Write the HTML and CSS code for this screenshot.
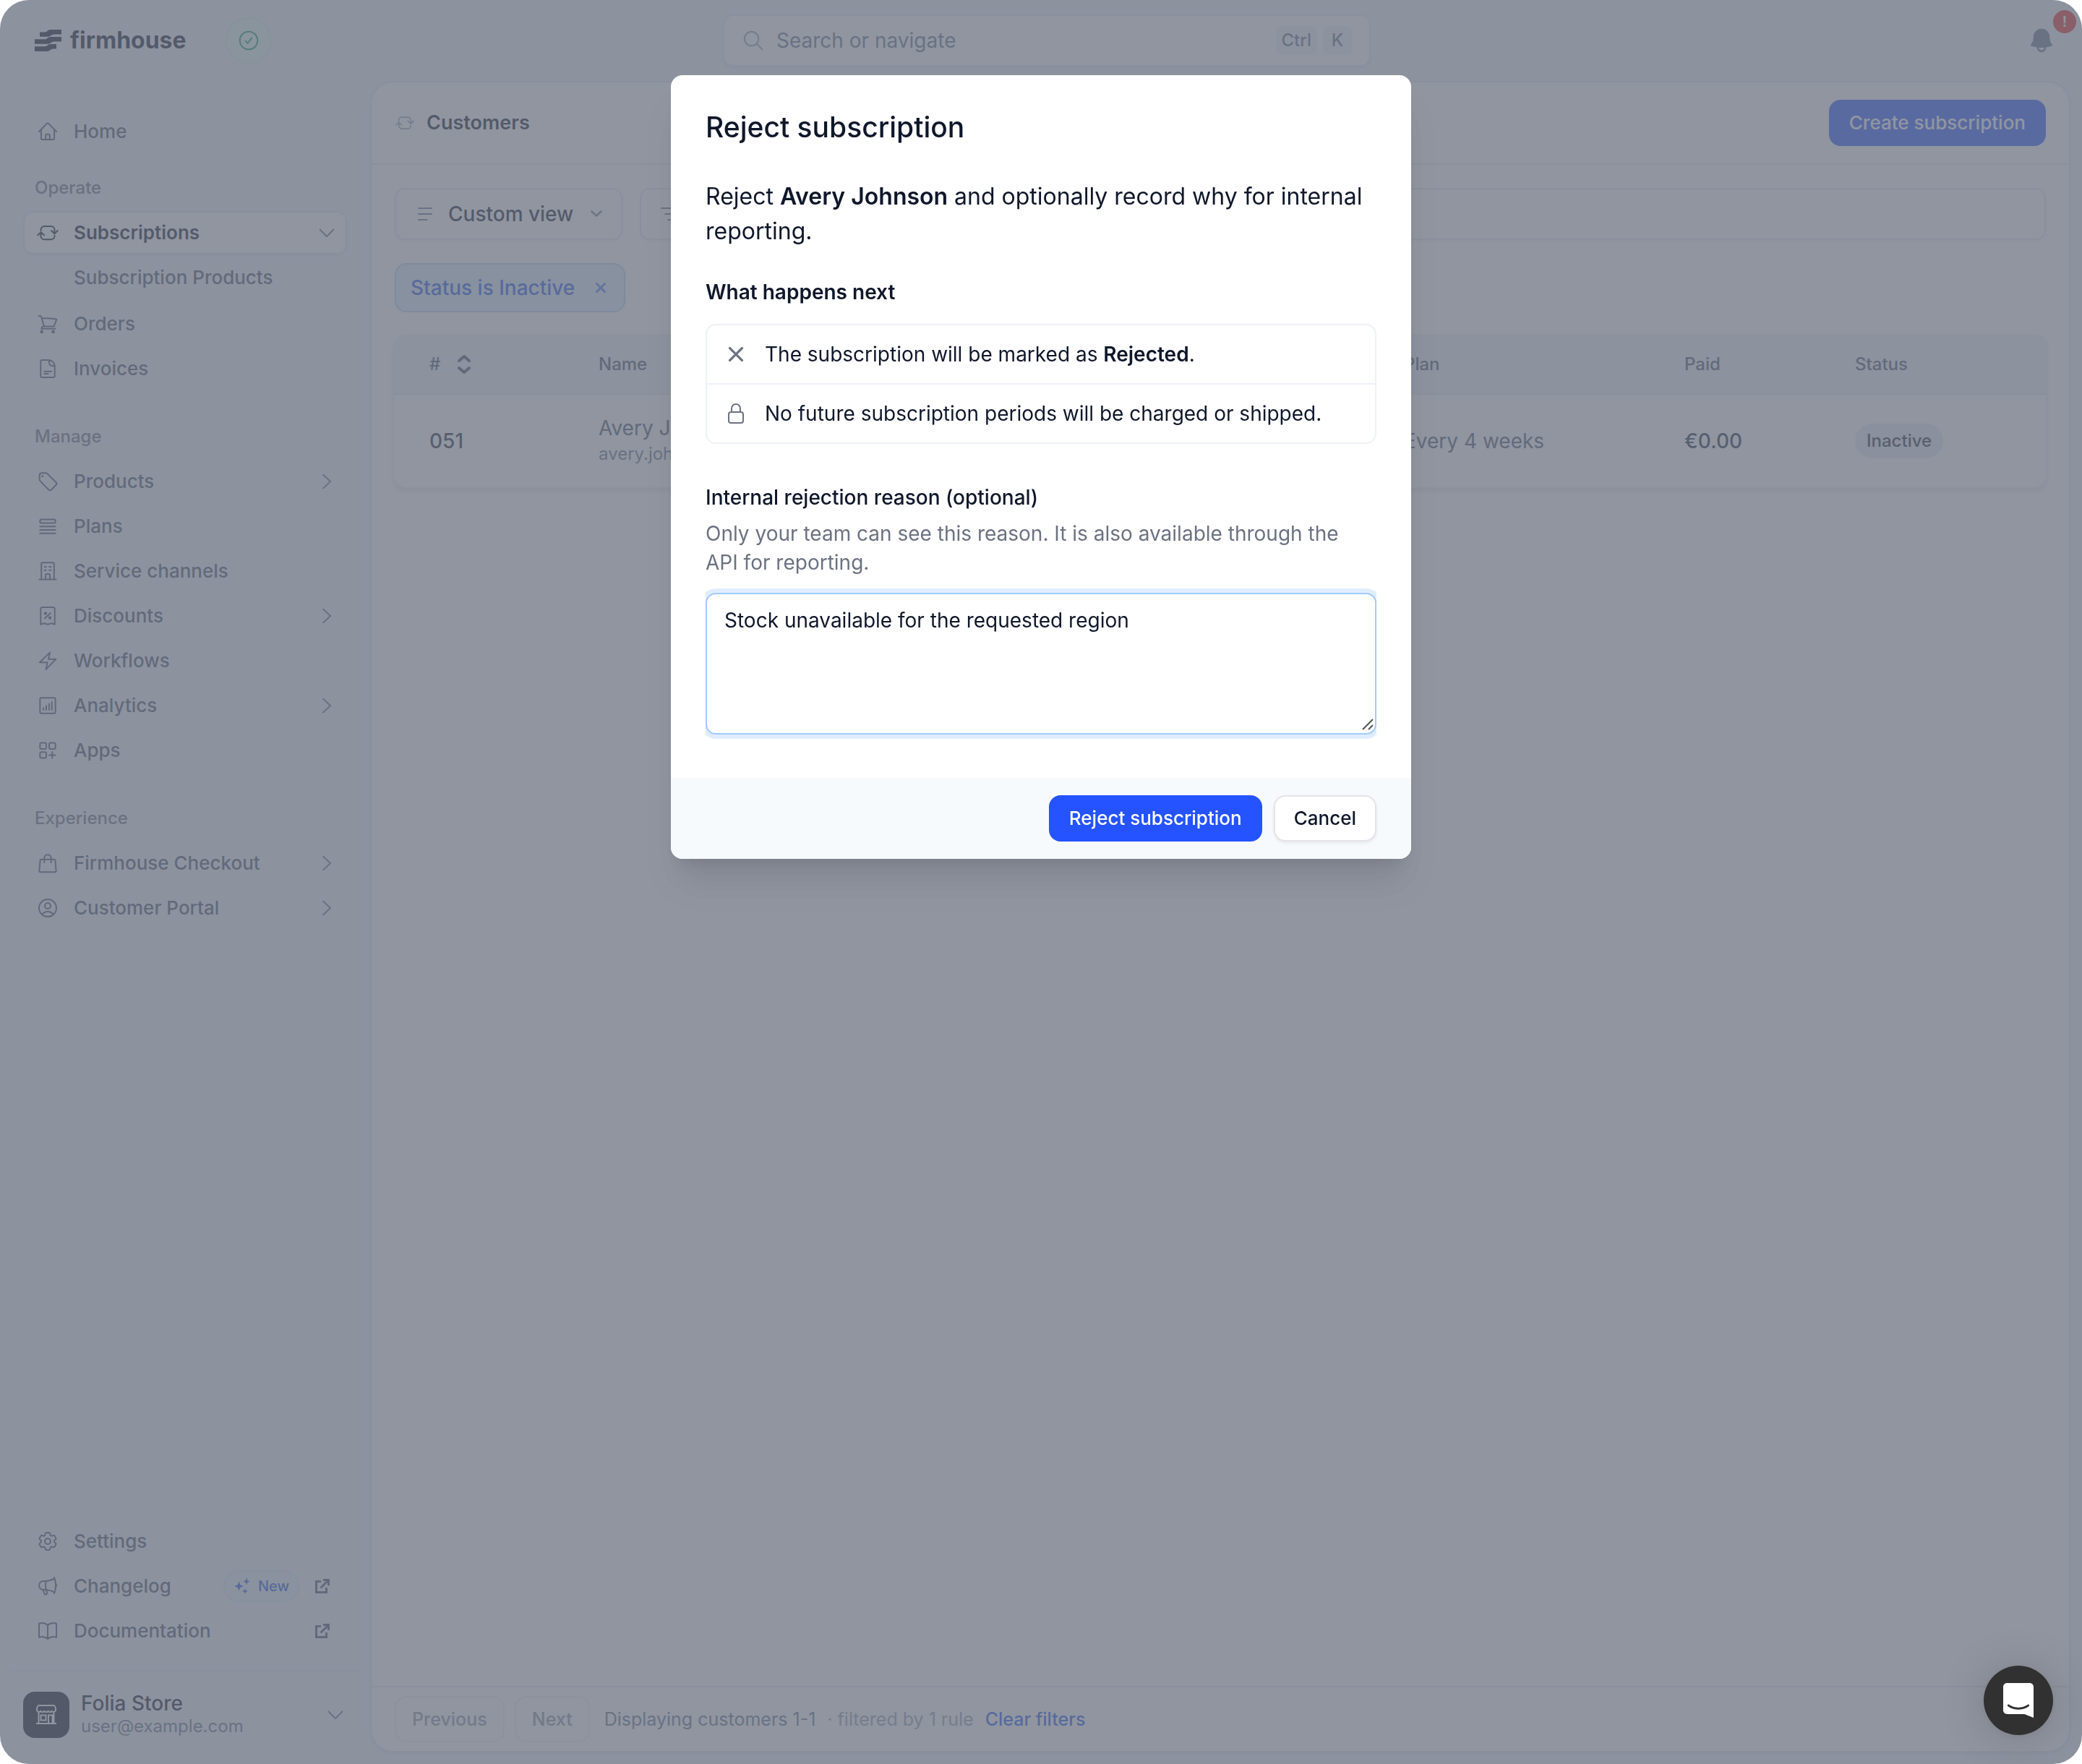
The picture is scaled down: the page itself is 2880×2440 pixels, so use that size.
FILE: index.html
```html
<!DOCTYPE html>
<html lang="en">
<head>
<meta charset="utf-8">
<title>Customers - Firmhouse</title>
<link rel="stylesheet" href="styles.css">
</head>
<body>
<svg class="sprite" aria-hidden="true">
  <symbol id="i-refresh" viewBox="0 0 24 24"><path d="M4.900 9.800V8.800a3.600 3.600 0 0 1 3.600-3.600h7a3.600 3.600 0 0 1 3.600 3.600v4M15.700 9.800l3.400 3.100 3.200-3.100M19.100 14.800v.5a3.600 3.600 0 0 1-3.600 3.600h-7a3.600 3.600 0 0 1-3.600-3.600v-3.900M1.700 14.500 4.900 11.400l3.400 3.100"/></symbol>
  <symbol id="i-right" viewBox="0 0 20 20"><path d="M5 0.5 15 10 5 19.5"/></symbol>
  <symbol id="i-down" viewBox="0 0 20 20"><path d="M0 5 10 15 20 5"/></symbol>
  <symbol id="i-external" viewBox="0 0 20 20"><path d="M8 3.5H1.5v15h14V12M11 1.5h7.5V9M18 2 7.5 12.5"/></symbol>
  <symbol id="i-lines" viewBox="0 0 24 24"><path d="M5.3 6h13.4M5.3 12h13.4M5.3 18h8.4"/></symbol>
</svg>

<div class="app">
  <header class="topbar">
    <div class="brand">
      <a class="logo" href="#" aria-label="firmhouse">
        <svg class="logo-mark" viewBox="0 0 37 30"><path d="M7 3.5h7C17 3.5 18 0 22 0h15v6.5H27C23 6.500 22 9.800 18 9.800H7ZM0 13.300h14C17 13.300 18 10 22 10h15v6.500H27C23 16.500 22 19.800 18 19.800H0ZM0 23.300h14C17 23.300 18 20 22 20h8v6.500H26C22 26.500 21 30 17 30H0Z"/></svg>
        <span>firmhouse</span>
      </a>
      <button class="status-dot" type="button" aria-label="All systems operational">
        <svg class="icon" viewBox="0 0 24 24"><circle cx="12" cy="12" r="9.200"/><path d="m8.700 12.500 2.300 2.300 4.200-5.300"/></svg>
      </button>
    </div>
    <label class="search">
      <svg class="icon" viewBox="0 0 24 24"><circle cx="10.200" cy="10.200" r="7.300"/><path d="m15.500 15.500 5.700 5.700"/></svg>
      <input type="text" placeholder="Search or navigate" aria-label="Search or navigate">
      <span class="keys"><kbd>Ctrl</kbd><kbd>K</kbd></span>
    </label>
    <button class="bell" type="button" aria-label="Notifications">
      <svg viewBox="0 0 24 24"><path fill-rule="evenodd" d="M5.25 9a6.75 6.75 0 0 1 13.5 0v.75c0 2.123.8 4.057 2.118 5.52a.75.75 0 0 1-.297 1.206c-1.544.57-3.16.99-4.831 1.243a3.75 3.75 0 1 1-7.48 0 24.585 24.585 0 0 1-4.831-1.244.75.75 0 0 1-.298-1.205A8.217 8.217 0 0 0 5.25 9.75V9Zm4.502 8.900a2.25 2.25 0 1 0 4.496 0 25.057 25.057 0 0 1-4.496 0Z"/></svg>
      <span class="bell-badge">!</span>
    </button>
  </header>

  <aside class="sidebar">
    <nav class="nav">
      <a class="nav-item" href="#"><svg class="icon" viewBox="0 0 24 24"><path d="m3 12 7.700-8a1.800 1.800 0 0 1 2.600 0L21 12M5.200 10v9a1.300 1.300 0 0 0 1.300 1.300h11a1.300 1.300 0 0 0 1.300-1.300v-9M9.900 20.300v-4.500a.9.900 0 0 1 .9-.9h2.400a.9.900 0 0 1 .9.900v4.500"/></svg>Home</a>

      <h2 class="nav-label first">Operate</h2>
      <a class="nav-item active" href="#"><svg class="icon"><use href="#i-refresh"/></svg>Subscriptions<svg class="chev"><use href="#i-down"/></svg></a>
      <a class="nav-item sub" href="#">Subscription Products</a>
      <a class="nav-item" href="#"><svg class="icon" viewBox="0 0 24 24"><path d="M2.600 3.800h1.200c.9 0 1.500.4 1.700 1.200l2.700 9.600h10.300L21.300 7.300C18 6.500 12 6 5.900 6M8.200 14.600c-1.800 0-2.700 1.300-2.700 2.500h14.300"/><circle class="dot" cx="5.800" cy="20.200" r="1"/><circle class="dot" cx="17.700" cy="20.200" r="1"/></svg>Orders</a>
      <a class="nav-item" href="#"><svg class="icon" viewBox="0 0 24 24"><path d="M13 3H5.900a1.200 1.200 0 0 0-1.200 1.200v15.600A1.200 1.200 0 0 0 5.900 21h12.200a1.200 1.200 0 0 0 1.200-1.200V9.500A6.500 6.500 0 0 0 13 3Zm0 0c.8.800.5 4.500 1.200 5.200.8.700 4 .4 5.100 1.400M8.500 14.800h7.300M8.500 17.200h4"/></svg>Invoices</a>

      <h2 class="nav-label">Manage</h2>
      <a class="nav-item" href="#"><svg class="icon" viewBox="0 0 24 24"><path d="M3.500 5.300a2.200 2.200 0 0 1 2.200-2.200h4.200a2.200 2.200 0 0 1 1.600.7l9 8.900a2.200 2.200 0 0 1 0 3.100l-4.600 4.600a2.200 2.200 0 0 1-3.100 0L4.200 11.500a2.200 2.200 0 0 1-.7-1.600Z"/><circle class="dot" cx="6.600" cy="6.400" r=".4"/></svg>Products<svg class="chev"><use href="#i-right"/></svg></a>
      <a class="nav-item" href="#"><svg class="icon" viewBox="0 0 24 24"><rect x="4" y="4.800" width="16" height="3.800" rx="1.500"/><path d="M4 12.100h16M4 15.700h16M4 19.300h16"/></svg>Plans</a>
      <a class="nav-item" href="#"><svg class="icon" viewBox="0 0 24 24"><path d="M3.300 20.700h17.400M5.400 20.700V4.600A1.400 1.400 0 0 1 6.800 3.200h10.400a1.400 1.400 0 0 1 1.400 1.400v16.100M8.700 7.500h1.700M13.600 7.500h1.700M8.700 11h1.700M13.600 11h1.700M9.800 20.700v-4.900a.8.800 0 0 1 .8-.8h2.800a.8.800 0 0 1 .8.800v4.900"/></svg>Service channels</a>
      <a class="nav-item" href="#"><svg class="icon" viewBox="0 0 24 24"><path d="M4.700 20.800V4.800A1.800 1.800 0 0 1 6.500 3h11a1.800 1.800 0 0 1 1.800 1.800v16l-3.600-1.200-3.700 1.200-3.700-1.200ZM9 14.500l6-5.500"/><circle class="dot" cx="9.700" cy="9.300" r=".9"/><circle class="dot" cx="14.300" cy="13.900" r=".9"/></svg>Discounts<svg class="chev"><use href="#i-right"/></svg></a>
      <a class="nav-item" href="#"><svg class="icon" viewBox="0 0 24 24"><path d="M14.300 3.300 3.700 13.700h8l-1.600 7.400L20.500 10.300h-7.800Z"/></svg>Workflows</a>
      <a class="nav-item" href="#"><svg class="icon" viewBox="0 0 24 24"><rect x="4" y="4" width="16" height="16" rx="1.400"/><path d="M7.600 14.500v2M10.500 12.200v4.300M13.400 10.200v6.300M16.300 8.200v8.300"/></svg>Analytics<svg class="chev"><use href="#i-right"/></svg></a>
      <a class="nav-item" href="#"><svg class="icon" viewBox="0 0 24 24"><rect x="4" y="4.200" width="6.500" height="6.300" rx="1.500"/><rect x="13.500" y="4.200" width="6.500" height="6.300" rx="1.500"/><rect x="4" y="13.600" width="6.500" height="6.300" rx="1.500"/><path d="M16.700 13.500v6.500M13.500 16.800H20"/></svg>Apps</a>

      <h2 class="nav-label">Experience</h2>
      <a class="nav-item" href="#"><svg class="icon" viewBox="0 0 24 24"><path d="M5.200 8h13.600a1 1 0 0 1 1 .9l.9 11a1.200 1.200 0 0 1-1.200 1.200h-15a1.200 1.200 0 0 1-1.200-1.200l.9-11a1 1 0 0 1 1-.9ZM8.500 11.300V6.600a3.500 3.500 0 0 1 7 0v4.700"/></svg>Firmhouse Checkout<svg class="chev"><use href="#i-right"/></svg></a>
      <a class="nav-item" href="#"><svg class="icon" viewBox="0 0 24 24"><path d="M17.982 18.725A7.488 7.488 0 0 0 12 15.75a7.488 7.488 0 0 0-5.982 2.975m11.963 0a9 9 0 1 0-11.963 0m11.963 0A8.966 8.966 0 0 1 12 21a8.966 8.966 0 0 1-5.982-2.275M15 9.75a3 3 0 1 1-6 0 3 3 0 0 1 6 0Z"/></svg>Customer Portal<svg class="chev"><use href="#i-right"/></svg></a>
    </nav>

    <nav class="nav nav-bottom">
      <a class="nav-item" href="#"><svg class="icon" viewBox="0 0 24 24"><path d="M9.594 3.94c.09-.542.56-.94 1.11-.94h2.593c.55 0 1.020.398 1.110.94l.213 1.281c.063.374.313.686.645.87.074.04.147.083.22.127.325.196.72.257 1.075.124l1.217-.456a1.125 1.125 0 0 1 1.37.49l1.296 2.247a1.125 1.125 0 0 1-.26 1.431l-1.003.827c-.293.241-.438.613-.43.992a7.723 7.723 0 0 1 0 .255c-.008.378.137.75.43.991l1.004.827c.424.35.534.955.26 1.43l-1.298 2.247a1.125 1.125 0 0 1-1.369.491l-1.217-.456c-.355-.133-.75-.072-1.076.124a6.47 6.47 0 0 1-.22.128c-.331.183-.581.495-.644.869l-.213 1.281c-.09.543-.56.94-1.110.94h-2.594c-.55 0-1.019-.398-1.110-.94l-.213-1.281c-.062-.374-.312-.686-.644-.87a6.520 6.520 0 0 1-.22-.127c-.325-.196-.72-.257-1.076-.124l-1.217.456a1.125 1.125 0 0 1-1.369-.49l-1.297-2.247a1.125 1.125 0 0 1 .26-1.431l1.004-.827c.292-.24.437-.613.43-.991a6.932 6.932 0 0 1 0-.255c.007-.38-.138-.751-.43-.992l-1.004-.827a1.125 1.125 0 0 1-.26-1.430l1.297-2.247a1.125 1.125 0 0 1 1.370-.491l1.216.456c.356.133.751.072 1.076-.124.072-.044.146-.086.22-.128.332-.183.582-.495.644-.869l.214-1.280Z"/><circle cx="12" cy="12" r="3"/></svg>Settings</a>
      <a class="nav-item" href="#"><svg class="icon" viewBox="0 0 24 24"><path d="M10.340 15.840c-.688-.06-1.386-.09-2.090-.09H7.500a4.500 4.500 0 1 1 0-9h.75c.704 0 1.402-.03 2.090-.09m0 9.180c.253.962.584 1.892.985 2.783.247.55.06 1.210-.463 1.511l-.657.38c-.551.318-1.260.117-1.527-.461a20.845 20.845 0 0 1-1.440-4.282m3.102.069a18.030 18.030 0 0 1-.59-4.590c0-1.586.205-3.124.59-4.590m0 9.180a23.848 23.848 0 0 1 8.835 2.535M10.340 6.660a23.847 23.847 0 0 0 8.835-2.535m0 0A23.740 23.740 0 0 0 18.795 3m.38 1.125a23.910 23.910 0 0 1 1.014 5.395m-1.014 8.855c-.118.38-.245.754-.38 1.125m.38-1.125a23.910 23.910 0 0 0 1.014-5.395m0-3.460c.495.413.811 1.035.811 1.730 0 .695-.316 1.317-.811 1.730m0-3.460a24.347 24.347 0 0 1 0 3.460"/></svg>Changelog<span class="new-badge"><svg viewBox="0 0 24 24"><path d="M7.500 5.500 9.300 10.200 14 12l-4.700 1.800L7.500 18.500 5.700 13.800 1 12l4.700-1.800ZM18 .5l1.300 3.700L23 5.500l-3.700 1.300L18 10.500l-1.300-3.700L13 5.500l3.700-1.300ZM16 15l1.100 2.900L20 19l-2.900 1.100L16 23l-1.100-2.900L12 19l2.900-1.100Z"/></svg>New</span><svg class="ext"><use href="#i-external"/></svg></a>
      <a class="nav-item" href="#"><svg class="icon" viewBox="0 0 24 24"><path d="M12 6.042A8.967 8.967 0 0 0 6 3.750c-1.052 0-2.062.18-3 .512v14.250A8.987 8.987 0 0 1 6 18c2.305 0 4.408.867 6 2.292m0-14.250a8.966 8.966 0 0 1 6-2.292c1.052 0 2.062.18 3 .512v14.250A8.987 8.987 0 0 0 18 18a8.967 8.967 0 0 0-6 2.292m0-14.250v14.250"/></svg>Documentation<svg class="ext"><use href="#i-external"/></svg></a>
    </nav>

    <button class="account" type="button">
      <span class="avatar"><svg viewBox="0 0 28 28"><path d="M4 1h20c2 0 3 3 3 5.500a3 3 0 0 1-5.200 2.500 3.500 3.500 0 0 1-5.200 0 3.500 3.500 0 0 1-5.200 0 3.500 3.500 0 0 1-5.200 0A3 3 0 0 1 1 6.500C1 4 2 1 4 1ZM3.500 11v15M24.500 11v15M0 26h28M6.500 14.500h7v7h-7ZM17 26V14.500h5.500V26"/></svg></span>
      <span class="account-text"><span class="account-name">Folia Store</span><span class="account-mail">user@example.com</span></span>
      <svg class="chev"><use href="#i-down"/></svg>
    </button>
  </aside>

  <main class="panel">
    <div class="panel-head">
      <svg class="head-icon"><use href="#i-refresh"/></svg>
      <h1>Customers</h1>
      <button class="btn btn-primary" type="button">Create subscription</button>
    </div>
    <div class="panel-body">
      <div class="filters">
        <button class="view-btn" type="button"><svg class="icon"><use href="#i-lines"/></svg>Custom view<svg class="mini-chev" viewBox="0 0 16 16"><path d="m1.500 4.500 6.500 6 6.500-6"/></svg></button>
        <div class="filter-search">
          <svg class="icon" viewBox="0 0 24 24"><path d="M3 6h18M7 12h10M10 18h4"/></svg>
          <input type="text" aria-label="Filter customers">
        </div>
      </div>
      <div class="chips">
        <span class="chip">Status is Inactive<button type="button" aria-label="Remove filter"><svg viewBox="0 0 14 14"><path d="m1.500 1.500 11 11M12.500 1.500l-11 11"/></svg></button></span>
      </div>
      <table class="table">
        <colgroup><col class="c-id"><col><col class="c-plan"><col class="c-paid"><col class="c-status"></colgroup>
        <thead>
          <tr><th scope="col"><span class="sort">#<svg viewBox="0 0 18 26"><path d="m2 8 7-6 7 6M2 18l7 6 7-6"/></svg></span></th><th scope="col">Name</th><th scope="col">Plan</th><th scope="col">Paid</th><th scope="col">Status</th></tr>
        </thead>
        <tbody>
          <tr><td class="strong">051</td><td><span class="cust">Avery Johnson</span><span class="mail">avery.johnson@example.com</span></td><td>Every 4 weeks</td><td class="strong">€0.00</td><td><span class="pill">Inactive</span></td></tr>
        </tbody>
      </table>
    </div>
    <footer class="panel-foot">
      <button class="page-btn" type="button" disabled>Previous</button>
      <button class="page-btn" type="button" disabled>Next</button>
      <p>Displaying customers 1-1 <span class="muted">· filtered by 1 rule</span> <a href="#">Clear filters</a></p>
    </footer>
  </main>
</div>

<div class="overlay">
  <section class="modal" role="dialog" aria-modal="true" aria-labelledby="modal-title">
    <div class="modal-body">
      <h2 class="modal-title" id="modal-title">Reject subscription</h2>
      <p class="lead">Reject <strong>Avery Johnson</strong> and optionally record why for internal reporting.</p>
      <h3 class="modal-sub">What happens next</h3>
      <ul class="outcomes">
        <li><svg class="icon cross" viewBox="0 0 24 24"><path d="m5.700 5.700 12.600 12.600M18.300 5.700 5.700 18.300"/></svg><span>The subscription will be marked as <strong>Rejected</strong>.</span></li>
        <li><svg class="icon" viewBox="0 0 24 24"><path d="M16.500 10.500V6.750a4.500 4.500 0 1 0-9 0v3.750m-.75 11.250h10.500a2.250 2.250 0 0 0 2.250-2.250v-6.750a2.250 2.250 0 0 0-2.250-2.250H6.750a2.250 2.250 0 0 0-2.250 2.250v6.750a2.250 2.250 0 0 0 2.250 2.250Z"/></svg><span>No future subscription periods will be charged or shipped.</span></li>
      </ul>
      <label class="field-label" for="reason">Internal rejection reason (optional)</label>
      <p class="hint" id="reason-hint">Only your team can see this reason. It is also available through the API for reporting.</p>
      <div class="field">
        <textarea id="reason" aria-describedby="reason-hint">Stock unavailable for the requested region</textarea>
        <svg class="grip" viewBox="0 0 16 16"><path d="M1 15 15 1M9 15l6-6"/></svg>
      </div>
    </div>
    <div class="modal-foot">
      <button class="btn btn-primary" type="button">Reject subscription</button>
      <button class="btn btn-plain" type="button">Cancel</button>
    </div>
  </section>
</div>

<button class="chat" type="button" aria-label="Open chat">
  <svg viewBox="0 0 28 32"><path d="M28 32s-4.714-1.855-8.527-3.340H3.437C1.540 28.660 0 27.026 0 25.013V3.644C0 1.633 1.540 0 3.437 0h21.125c1.898 0 3.437 1.632 3.437 3.645v18.404H28V32zm-4.139-11.982a.88.88 0 00-1.292-.105c-.03.026-3.015 2.681-8.570 2.681-5.486 0-8.517-2.636-8.571-2.684a.88.88 0 00-1.290.107 1.010 1.010 0 00-.219.708.992.992 0 00.318.664c.142.128 3.537 3.150 9.762 3.150 6.226 0 9.621-3.022 9.763-3.150a.992.992 0 00.317-.664 1.010 1.010 0 00-.218-.707z"/></svg>
</button>
</body>
</html>
```
FILE: styles.css
```css
:root {
  --ink: #0f172a;
  --text: #475569;
  --soft: #6b7280;
  --line: #e2e8f0;
  --primary: #2453ff;
}

* { box-sizing: border-box; }

body {
  margin: 0;
  background: #fff;
  color: var(--ink);
  font-family: Inter, "Liberation Sans", sans-serif;
  font-size: 28px;
  line-height: 40px;
}

h1, h2, h3, p, ul { margin: 0; padding: 0; }
button, input, textarea { font: inherit; color: inherit; }
button { border: 0; background: none; padding: 0; }
a { color: inherit; text-decoration: none; }
svg { flex: none; }
.sprite { position: absolute; width: 0; height: 0; }

.icon, .chev, .ext, .head-icon {
  width: 32px;
  height: 32px;
  fill: none;
  stroke: currentColor;
  stroke-width: 1.5;
  stroke-linecap: round;
  stroke-linejoin: round;
}
.icon .dot { fill: currentColor; }
.chev { width: 20px; height: 20px; margin-left: auto; color: var(--soft); stroke-width: 2; overflow: visible; }
.ext { padding: 6px; margin-left: auto; stroke-width: 3; stroke-linecap: butt; stroke-linejoin: miter; }

/* Shell */
.app {
  display: grid;
  grid-template: 112px 1fr / 512px 1fr;
  min-height: 100vh;
  border-radius: 40px;
  background: #f1f4fa;
}

.topbar {
  grid-column: 1 / -1;
  display: grid;
  grid-template-columns: 1fr 896px 1fr;
  align-items: center;
  padding: 0 32px 0 48px;
}
.brand { display: flex; align-items: center; gap: 54px; }
.logo { display: flex; align-items: center; gap: 12px; font-size: 32px; font-weight: 700; }
.logo-mark { width: 37px; height: 30px; fill: var(--ink); }
.status-dot {
  display: grid;
  place-items: center;
  width: 64px;
  height: 64px;
  border: 2px solid #d5f5e8;
  border-radius: 50%;
  background: #e6faf0;
  color: #10a070;
}

.search {
  display: flex;
  align-items: center;
  gap: 16px;
  height: 72px;
  padding: 0 24px;
  border: 2px solid #e8ecf3;
  border-radius: 14px;
  background: #fff;
  background-clip: padding-box;
  color: #94a0b0;
  box-shadow: 0 2px 4px rgba(15, 23, 42, .08);
}
.search input { flex: 1; min-width: 0; border: 0; padding: 0; outline: 0; background: none; }
.search input::placeholder { color: #64748b; opacity: 1; }
.keys { display: flex; gap: 8px; }
kbd {
  min-width: 40px;
  padding: 0 8px;
  border-radius: 8px;
  background: #f1f4fa;
  color: #64748b;
  font: 500 24px/40px Inter, "Liberation Sans", sans-serif;
  text-align: center;
}

.bell { position: relative; justify-self: end; width: 48px; height: 40px; color: #64748b; }
.bell svg { display: block; width: 40px; height: 40px; margin: 0 auto; fill: currentColor; }
.bell-badge {
  position: absolute;
  top: -22px;
  right: -24px;
  width: 32px;
  height: 32px;
  border-radius: 50%;
  background: #e52a24;
  color: #fff;
  font-size: 20px;
  font-weight: 600;
  line-height: 32px;
  text-align: center;
}

/* Sidebar */
.sidebar { display: flex; flex-direction: column; padding: 40px 16px 36px; }
.nav { display: flex; flex-direction: column; gap: 2px; padding: 0 16px; }
.nav-label {
  margin: 46px 0 14px;
  padding-left: 16px;
  color: var(--soft);
  font-size: 24px;
  font-weight: 500;
  line-height: 32px;
}
.nav-label.first { margin-top: 30px; }
.nav-item {
  display: flex;
  align-items: center;
  gap: 20px;
  height: 60px;
  padding: 0 16px;
  border: 2px solid transparent;
  border-radius: 14px;
  color: var(--text);
  font-size: 26px;
  font-weight: 500;
}
.nav-item.active {
  border-color: var(--line);
  background: #fff;
  color: var(--ink);
  font-weight: 600;
  box-shadow: 0 2px 4px rgba(15, 23, 42, .06);
}
.nav-item.sub { padding-left: 68px; margin-bottom: 2px; }
.nav-bottom { margin-top: auto; padding-bottom: 24px; }
.new-badge {
  display: flex;
  align-items: center;
  gap: 10px;
  height: 44px;
  margin-left: auto;
  margin-right: -4px;
  padding: 0 12px;
  border: 2px solid #d8eaf4;
  border-radius: 22px;
  background: #e8f3fa;
  color: #1d55e8;
  font-size: 20px;
}
.new-badge svg { width: 24px; height: 24px; fill: currentColor; }
.new-badge + .ext { margin-left: 0; }

.account {
  display: flex;
  align-items: center;
  gap: 16px;
  padding: 28px 22px 0 16px;
  border-top: 2px solid var(--line);
  text-align: left;
}
.avatar { display: grid; place-items: center; width: 64px; height: 64px; border-radius: 16px; background: #0c1222; }
.avatar svg { width: 28px; height: 28px; fill: none; stroke: #fff; stroke-width: 2; }
.account-text { display: flex; flex-direction: column; }
.account-name { font-weight: 500; line-height: 32px; }
.account-mail { color: #64748b; font-size: 24px; line-height: 32px; }

/* Main panel */
.panel {
  display: flex;
  flex-direction: column;
  margin: 0 16px 16px 0;
  border: 2px solid var(--line);
  border-radius: 32px;
  background: #fff;
  box-shadow: 0 2px 4px rgba(15, 23, 42, .08);
}
.panel-head {
  display: flex;
  align-items: center;
  gap: 16px;
  height: 114px;
  padding: 0 32px;
  border-bottom: 2px solid var(--line);
}
.head-icon { width: 28px; height: 28px; color: #94a3b8; }
.panel-head h1 { margin-right: auto; font-size: 27px; font-weight: 600; }

.btn {
  height: 64px;
  padding: 0 28px;
  border-radius: 16px;
  font-size: 26px;
  font-weight: 500;
}
.btn-primary { background: var(--primary); color: #fff; }
.btn-plain { padding: 0 26px; border: 2px solid #e5e3ea; background: #fff; box-shadow: 0 2px 4px rgba(15, 23, 42, .08); }

.panel-body { display: flex; flex: 1; flex-direction: column; gap: 32px; padding: 32px; }
.filters { display: flex; gap: 24px; }
.view-btn, .filter-search {
  display: flex;
  align-items: center;
  gap: 16px;
  height: 72px;
  padding: 0 18px 0 24px;
  border: 2px solid var(--line);
  border-radius: 14px;
  background: #fff;
  font-weight: 500;
  box-shadow: 0 2px 4px rgba(15, 23, 42, .05);
}
.view-btn .icon, .filter-search .icon { color: #64748b; }
.mini-chev { width: 16px; height: 16px; margin: 0 8px; fill: none; stroke: #7d8798; stroke-width: 3; stroke-linecap: round; stroke-linejoin: round; }
.filter-search { flex: 1; }
.filter-search input { flex: 1; border: 0; outline: 0; background: none; }

.chips { display: flex; }
.chip {
  display: flex;
  align-items: center;
  height: 68px;
  padding: 0 16px 0 20px;
  border: 2px solid #b2d4f2;
  border-radius: 16px;
  background: #e0eefb;
  color: #1d55ee;
  font-weight: 500;
}
.chip button { display: grid; place-items: center; width: 32px; height: 32px; margin-left: 20px; color: #4f7cf0; }
.chip svg { width: 14px; height: 14px; fill: none; stroke: currentColor; stroke-width: 3; stroke-linecap: round; }

.table {
  width: 100%;
  table-layout: fixed;
  border-spacing: 0;
  border-radius: 16px;
  text-align: left;
  box-shadow: 0 0 0 2px #eef1f6, 0 4px 6px 2px rgba(15, 23, 42, .1);
}
.c-id { width: 258px; }
.c-plan { width: 388px; }
.c-paid { width: 236px; }
.c-status { width: 288px; }
th {
  height: 82px;
  padding: 0 24px;
  border-bottom: 2px solid var(--line);
  background: #eef1f7;
  color: var(--text);
  font-size: 24px;
  font-weight: 500;
}
th:first-child { border-top-left-radius: 16px; }
th:last-child { border-top-right-radius: 16px; }
td { height: 128px; padding: 0 24px; color: var(--text); }
th:first-child, td:first-child { padding-left: 48px; }
.sort { display: flex; align-items: center; gap: 24px; }
.sort svg { width: 18px; height: 26px; fill: none; stroke: currentColor; stroke-width: 4; stroke-linecap: round; stroke-linejoin: round; }
.strong { color: #1e293b; font-weight: 500; }
.cust, .mail { display: block; line-height: 36px; }
.mail { color: #64748b; font-size: 24px; }
.pill {
  display: inline-block;
  padding: 0 16px;
  border-radius: 24px;
  background: #e6eaf1;
  color: #1e293b;
  font-size: 24px;
  font-weight: 500;
  line-height: 48px;
}

.panel-foot {
  display: flex;
  align-items: center;
  gap: 14px;
  height: 90px;
  padding: 0 32px;
  border-top: 2px solid var(--line);
  font-size: 25px;
}
.page-btn { height: 64px; padding: 0 22px; border: 2px solid #edf0f5; border-radius: 16px; color: #8b93a5; font-weight: 500; }
.panel-foot p { display: flex; gap: 16px; padding-left: 6px; color: #64748b; }
.panel-foot .muted { color: #94a0b0; }
.panel-foot a { color: #1d55ee; font-weight: 500; }

/* Modal */
.overlay {
  position: fixed;
  inset: 0;
  display: flex;
  align-items: flex-start;
  justify-content: center;
  padding: 104px 32px;
  border-radius: 40px;
  background: rgba(107, 114, 128, .75);
}
.modal {
  width: 100%;
  max-width: 1024px;
  border-radius: 16px;
  background: #fff;
  overflow: hidden;
  box-shadow: 0 40px 50px -10px rgba(0, 0, 0, .1), 0 16px 20px -12px rgba(0, 0, 0, .1);
}
.modal-body { padding: 48px 48px 54px; }
.modal-title { font-size: 39px; font-weight: 500; line-height: 48px; }
.lead { margin-top: 48px; font-size: 32px; line-height: 48px; }
strong { font-weight: 600; }
.modal-sub { margin: 40px 0 24px; font-size: 28px; font-weight: 600; line-height: 40px; }
.outcomes { border: 2px solid #eef1f8; border-radius: 14px; list-style: none; }
.outcomes li { display: flex; align-items: center; gap: 24px; height: 80px; padding: 0 24px; }
.outcomes li + li { height: 82px; border-top: 2px solid #eef1f8; }
.outcomes .icon { color: var(--soft); }
.outcomes .cross { stroke-width: 2.5; }
.field-label { display: block; margin-top: 54px; font-weight: 500; }
.hint { margin-top: 10px; color: var(--soft); }
.field { position: relative; margin-top: 16px; padding: 6px 0; overflow: hidden; }
textarea {
  display: block;
  width: 100%;
  height: 196px;
  padding: 16px 24px;
  border: 2px solid #a3caff;
  border-radius: 14px;
  outline: 0;
  resize: none;
  box-shadow: 0 0 0 6px #e0edff;
}
.grip { position: absolute; right: 4px; bottom: 12px; width: 16px; height: 16px; fill: none; stroke: #555; stroke-width: 2; }
.modal-foot { display: flex; justify-content: flex-end; gap: 16px; padding: 24px 48px; background: #f7fafc; }

.chat {
  position: fixed;
  right: 40px;
  bottom: 40px;
  display: grid;
  place-items: center;
  width: 96px;
  height: 96px;
  border-radius: 50%;
  background: #313131;
  box-shadow: 0 2px 12px rgba(0, 0, 0, .06), 0 4px 64px rgba(0, 0, 0, .16);
}
.chat svg { width: 42px; height: 48px; fill: #fff; }
```
